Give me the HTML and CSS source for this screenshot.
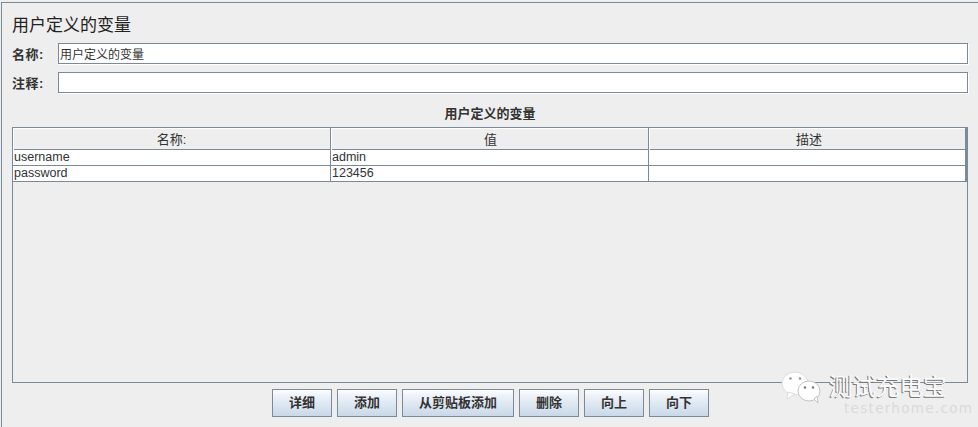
FILE: index.html
```html
<!DOCTYPE html>
<html lang="zh">
<head>
<meta charset="utf-8">
<title>用户定义的变量</title>
<link rel="stylesheet" href="styles.css">
</head>
<body>
<div class="panel">
  <h1 class="title">用户定义的变量</h1>
  <div class="field-row">
    <label class="field-label">名称:</label>
    <div class="field-input">用户定义的变量</div>
  </div>
  <div class="field-row">
    <label class="field-label">注释:</label>
    <div class="field-input"></div>
  </div>
  <div class="caption">用户定义的变量</div>
  <div class="table">
    <div class="row head">
      <div class="cell">名称:</div>
      <div class="cell">值</div>
      <div class="cell">描述</div>
    </div>
    <div class="row">
      <div class="cell">username</div>
      <div class="cell">admin</div>
      <div class="cell"></div>
    </div>
    <div class="row">
      <div class="cell">password</div>
      <div class="cell">123456</div>
      <div class="cell"></div>
    </div>
  </div>
  <div class="buttons">
    <div class="btn w60">详细</div>
    <div class="btn w60">添加</div>
    <div class="btn w112">从剪贴板添加</div>
    <div class="btn w60">删除</div>
    <div class="btn w60">向上</div>
    <div class="btn w60">向下</div>
  </div>
</div>
<div class="watermark">
  <svg class="wechat" width="42" height="32" viewBox="0 0 42 32" aria-hidden="true">
    <ellipse cx="14" cy="12.500" rx="13" ry="11.500" fill="#fff" stroke="#dcdcdc"/>
    <path d="M7 21 L6 28 L14 23 Z" fill="#fff" stroke="#dcdcdc"/>
    <ellipse cx="28" cy="20" rx="11" ry="10" fill="#fff" stroke="#c4c4c4"/>
    <path d="M33 28 L37 32 L36 25 Z" fill="#fff" stroke="#c4c4c4"/>
    <circle cx="9.500" cy="7.500" r="1.300" fill="#999"/>
    <circle cx="19" cy="7.500" r="1.300" fill="#999"/>
    <circle cx="24" cy="16.500" r="1.200" fill="#777"/>
    <circle cx="32" cy="16.500" r="1.200" fill="#777"/>
  </svg>
  <div class="wm-name">测试充电宝</div>
  <div class="wm-site">testerhome.com</div>
</div>
</body>
</html>
```
FILE: styles.css
```css
* { box-sizing: border-box; }
html, body { margin: 0; padding: 0; }
body {
  width: 978px;
  height: 427px;
  overflow: hidden;
  position: relative;
  background: #eeeeee;
  font-family: "Liberation Sans", "Noto Sans CJK SC", sans-serif;
  color: #333333;
}
.panel {
  margin: 2px 0 0 1px;
  height: 425px;
  border-top: 1px solid #7a8a99;
  border-left: 1px solid #7a8a99;
  padding: 13px 10px 0 10px;
}
.title {
  margin: 0 0 7px;
  font-size: 17px;
  line-height: 20px;
  font-weight: 400;
  color: #222;
}
.field-row {
  display: flex;
  align-items: center;
  height: 21px;
  margin-bottom: 8px;
}
.field-label {
  width: 46px;
  font-size: 13px;
  font-weight: 700;
  letter-spacing: 0.500px;
  color: #333;
}
.field-input {
  width: 910px;
  height: 21px;
  background: #fff;
  border: 1px solid #7a8a99;
  box-shadow: 1px 1px 0 #fff;
  font-size: 12px;
  line-height: 22px;
  padding-left: 1px;
  color: #333;
}
.caption {
  margin-top: 13px;
  height: 15px;
  line-height: 15px;
  text-align: center;
  font-size: 13px;
  font-weight: 700;
  width: 956px;
}
.table {
  margin-top: 6px;
  width: 956px;
  height: 256px;
  border: 1px solid #7a8a99;
  overflow: hidden;
}
.row {
  display: grid;
  grid-template-columns: 318px 318px 318px;
  height: 16px;
  background: #fff;
  border-bottom: 1px solid #7a8a99;
  font-size: 12.500px;
  line-height: 15px;
}
.row .cell {
  border-right: 1px solid #7a8a99;
  padding-left: 1px;
  white-space: nowrap;
}
.row .cell:last-child { border-right: 2px solid #7a8a99; }
.row.head {
  height: 22px;
  background: #eeeeee;
  font-size: 13px;
  line-height: 23px;
}
.row.head .cell {
  text-align: center;
  padding-left: 0;
  box-shadow: inset 1px 1px 0 #fff;
}
.row.head .cell:nth-child(2) { padding-left: 2px; }
.row.head .cell:last-child { padding-left: 4px; }
.buttons {
  display: flex;
  gap: 5px;
  margin-top: 6px;
  margin-left: 260px;
}
.btn {
  height: 28px;
  border: 1px solid #7a8a99;
  background: linear-gradient(to bottom, #ffffff 0%, #eef3f9 20%, #c9d8e8 100%);
  font-size: 13px;
  font-weight: 700;
  line-height: 26px;
  text-align: center;
  color: #333;
}
.w60 { width: 60px; }
.w112 { width: 112px; }
.watermark {
  position: absolute;
  left: 780px;
  top: 368px;
  width: 198px;
  height: 59px;
}
.wechat { position: absolute; left: 1px; top: 3px; }
.wm-name {
  position: absolute;
  left: 49px;
  top: 4px;
  font-size: 23.500px;
  line-height: 26px;
  white-space: nowrap;
  color: #fafafa;
  font-family: "Noto Sans CJK SC", sans-serif;
  text-shadow: -1px 1px 0 #777777;
}
.wm-site {
  position: absolute;
  left: 64px;
  top: 32px;
  font-size: 13.500px;
  line-height: 16px;
  letter-spacing: 1.300px;
  white-space: nowrap;
  color: #dadada;
  font-family: "DejaVu Sans", sans-serif;
}
```
